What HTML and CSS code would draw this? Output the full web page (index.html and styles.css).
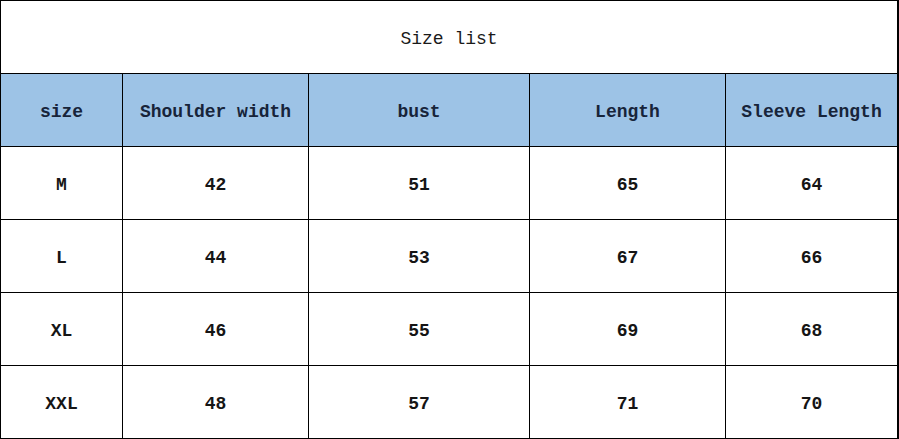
FILE: index.html
```html
<!DOCTYPE html>
<html>
<head>
<meta charset="utf-8">
<link rel="stylesheet" href="styles.css">
</head>
<body>
<div class="sheet">
  <div class="cell title">Size list</div>
  <div class="cell head">size</div>
  <div class="cell head">Shoulder width</div>
  <div class="cell head">bust</div>
  <div class="cell head">Length</div>
  <div class="cell head">Sleeve Length</div>

  <div class="cell">M</div><div class="cell">42</div><div class="cell">51</div><div class="cell">65</div><div class="cell">64</div>
  <div class="cell">L</div><div class="cell">44</div><div class="cell">53</div><div class="cell">67</div><div class="cell">66</div>
  <div class="cell">XL</div><div class="cell">46</div><div class="cell">55</div><div class="cell">69</div><div class="cell">68</div>
  <div class="cell">XXL</div><div class="cell">48</div><div class="cell">57</div><div class="cell">71</div><div class="cell">70</div>
</div>
</body>
</html>
```
FILE: styles.css
```css
html, body {
  margin: 0;
  padding: 0;
  background: #ffffff;
}
.sheet {
  width: 899px;
  box-sizing: border-box;
  display: grid;
  grid-template-columns: 121px 185px 220px 195px 171px;
  grid-auto-rows: 72px;
  gap: 1px;
  padding: 1px 2px 1px 1px;
  background: #000000;
}
.cell {
  background: #ffffff;
  display: flex;
  align-items: center;
  justify-content: center;
  padding-top: 3px;
  box-sizing: border-box;
  font-family: "Liberation Mono", "DejaVu Sans Mono", monospace;
  font-size: 18px;
  font-weight: bold;
  color: #151515;
}
.title {
  grid-column: 1 / -1;
  font-weight: normal;
  color: #1a1a1a;
}
.head {
  background: #9dc3e6;
  color: #17243a;
}
```
